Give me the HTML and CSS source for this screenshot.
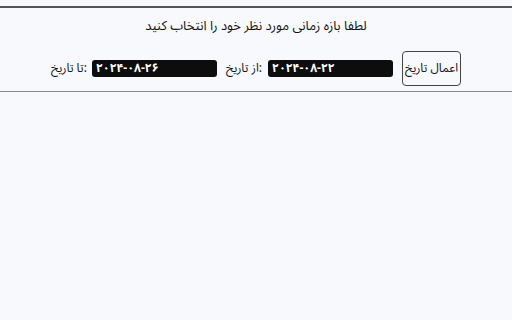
FILE: index.html
```html
<!DOCTYPE html>
<html lang="fa">
<head>
<meta charset="utf-8">
<link rel="stylesheet" href="styles.css">
</head>
<body>
<div class="panel">
  <div class="title">لطفا بازه زمانی مورد نظر خود را انتخاب کنید</div>
  <div class="row">
    <span class="label">تا تاریخ:</span>
    <span class="date">۲۰۲۴-۰۸-۲۶</span>
    <span class="label label-from">از تاریخ:</span>
    <span class="date">۲۰۲۴-۰۸-۲۲</span>
    <button class="apply">اعمال تاریخ</button>
  </div>
</div>
</body>
</html>
```
FILE: styles.css
```css
html, body {
  margin: 0;
  background: #f8f9fd;
}
body {
  font-family: "Noto Sans Arabic", "DejaVu Sans", sans-serif;
  color: #111;
}
.panel {
  margin-top: 6px;
  border-top: 2px solid #555;
  border-bottom: 1px solid #8a8a8a;
  padding: 8px 0 5px;
}
.title {
  text-align: center;
  font-size: 13px;
  line-height: 20px;
}
.row {
  margin-top: 15px;
  display: flex;
  justify-content: center;
  align-items: center;
}
.label {
  font-size: 12px;
  margin-right: 5px;
}
.label-from {
  margin-left: 9px;
  margin-right: 6px;
}
.date {
  width: 121px;
  height: 17px;
  line-height: 17px;
  padding-left: 4px;
  background: #0d0d0d;
  border-radius: 3px;
  color: #fff;
  font-weight: bold;
  font-size: 12px;
}
.apply {
  margin-left: 9px;
  width: 59px;
  height: 35px;
  padding: 0;
  background: transparent;
  border: 1px solid #444;
  border-radius: 4px;
  font-family: inherit;
  font-size: 12px;
  color: #111;
}
```
